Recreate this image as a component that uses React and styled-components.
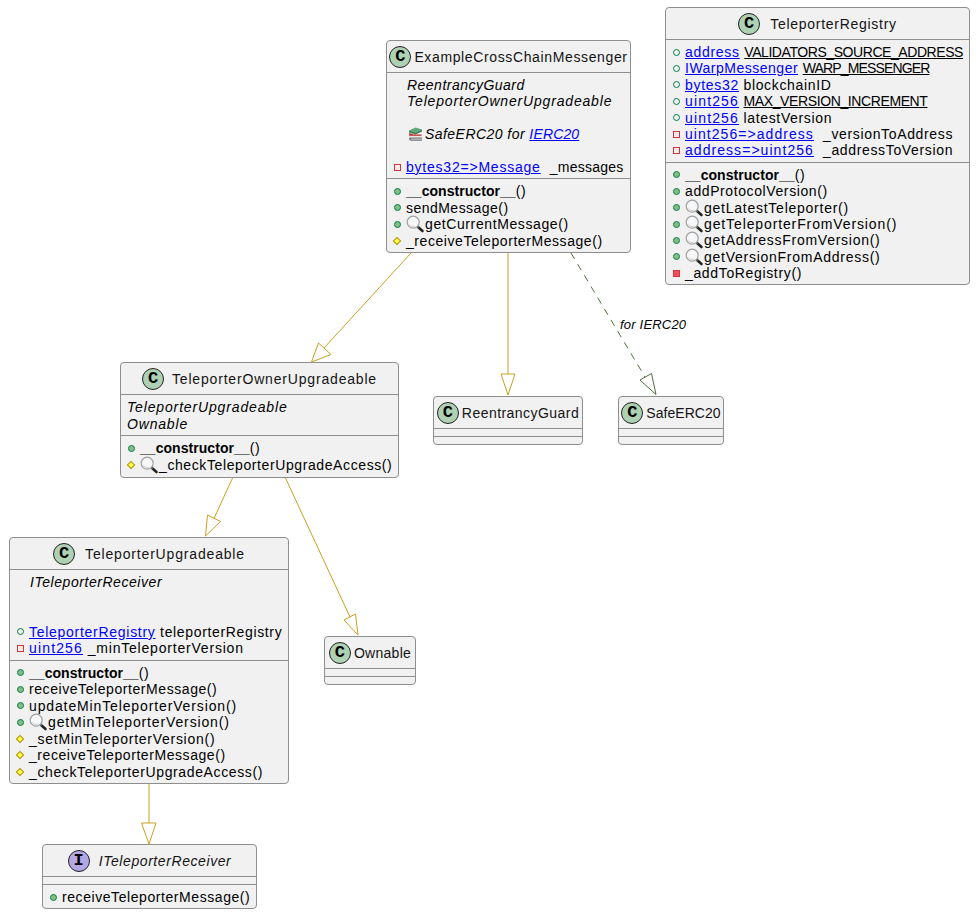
import React from "react";
import styled, { createGlobalStyle } from "styled-components";

const Global = createGlobalStyle`
  html, body { margin: 0; padding: 0; background: #fff; }
  body { font-family: "Liberation Sans", Arial, sans-serif; }
`;

const Canvas = styled.div`
  position: relative;
  width: 976px;
  height: 916px;
  overflow: hidden;
  background: #fff;
  color: #000;
  font-size: 14px;
  letter-spacing: 0.65px;
`;

const Edges = styled.svg`
  position: absolute;
  left: 0;
  top: 0;
`;

const EdgeLabel = styled.span`
  position: absolute;
  left: 620px;
  top: 317px;
  font-size: 13px;
  line-height: 16px;
  font-style: italic;
  letter-spacing: 0.2px;
  white-space: pre;
`;

const Node = styled.div`
  position: absolute;
  left: ${(p) => p.$x}px;
  top: ${(p) => p.$y}px;
  width: ${(p) => p.$w}px;
  box-sizing: border-box;
  background: #f1f1f1;
  border: 1px solid #8e8e8e;
  border-radius: 4px;
`;

const Header = styled.div`
  display: flex;
  align-items: center;
  justify-content: center;
  gap: ${(p) => p.$gap}px;
  height: 31px;
`;

const Spot = styled.span`
  flex: none;
  box-sizing: border-box;
  width: 22px;
  height: 22px;
  border-radius: 50%;
  border: 1px solid #222;
  background: ${(p) => (p.$iface ? "#b4a7e5" : "#add1b2")};
  display: flex;
  align-items: center;
  justify-content: center;
  font-family: "Liberation Mono", monospace;
  font-weight: 700;
  font-size: 17px;
  line-height: 1;
  letter-spacing: 0;
  color: #000;
`;

const Title = styled.span`
  white-space: pre;
  color: #141414;
  letter-spacing: ${(p) => p.$ls ?? 0.7}px;
  font-style: ${(p) => (p.$italic ? "italic" : "normal")};
`;

const Section = styled.div`
  --row-h: ${(p) => p.$rh ?? 16.4}px;
  border-top: 1px solid #8e8e8e;
  min-height: 7px;
  padding: ${(p) => (p.$empty ? "0" : "4px 0 3px")};
`;

const Row = styled.div`
  display: flex;
  align-items: center;
  height: var(--row-h);
  line-height: var(--row-h);
  padding-left: ${(p) => p.$indent ?? 5}px;
  white-space: pre;
`;

const RowText = styled.span`
  white-space: pre;
  letter-spacing: ${(p) => p.$ls ?? 0.65}px;
`;

const MarkSlot = styled.span`
  flex: none;
  width: 10px;
  height: 10px;
  margin-right: 4px;
  display: flex;
  align-items: center;
  justify-content: center;
`;

const PublicMark = styled.i`
  display: block;
  box-sizing: border-box;
  width: 7px;
  height: 7px;
  border-radius: 50%;
  border: 1px solid #038048;
  background: ${(p) => (p.$filled ? "#84be84" : "transparent")};
`;

const PrivateMark = styled.i`
  display: block;
  box-sizing: border-box;
  width: 7px;
  height: 7px;
  border: 1px solid #d0343c;
  background: ${(p) => (p.$filled ? "#f24d5c" : "#fbeaea")};
`;

const ProtectedMark = styled.i`
  display: block;
  box-sizing: border-box;
  width: 6px;
  height: 6px;
  border: 1px solid #b38d22;
  background: #ffff44;
  transform: rotate(45deg);
`;

const Link = styled.a`
  color: #0000ff;
  text-decoration: underline;
  letter-spacing: ${(p) => p.$ls ?? 0.8}px;
`;

const Static = styled.span`
  text-decoration: underline;
  letter-spacing: ${(p) => p.$ls ?? -0.37}px;
`;

const Plain = styled.span`
  letter-spacing: ${(p) => p.$ls}px;
`;

const Bold = styled.b`
  font-weight: 700;
  letter-spacing: 0.05px;
`;

const Italic = styled.em`
  font-style: italic;
  letter-spacing: ${(p) => p.$ls ?? 0.82}px;
`;

const IconHolder = styled.svg`
  flex: none;
  margin-right: ${(p) => p.$mr ?? 0}px;
  overflow: visible;
`;

function Magnifier() {
  return (
    <IconHolder width="19" height="16" viewBox="0 0 19 16">
      <path d="M12 11 L16.5 15" stroke="#222" strokeWidth="2.6" strokeLinecap="round" />
      <circle cx="7.2" cy="6.2" r="6" fill="#f5f7f9" stroke="#a2a2a2" strokeWidth="1.2" />
      <path d="M3.4 8.6 A4.6 4.6 0 0 0 9 10.2" fill="none" stroke="#cfd3d8" strokeWidth="1" />
      <path d="M11.4 10.6 L12.6 11.7" stroke="#777" strokeWidth="1.8" />
    </IconHolder>
  );
}

function Books() {
  return (
    <IconHolder width="17" height="15" viewBox="0 0 17 15" $mr={1}>
      <path d="M2 3.5 L8.5 0.5 L15 2.5 L8.5 5.5 Z" fill="#5ca877" />
      <path d="M2 3.5 L8.5 5.5 L15 2.5 L15 4.5 L8.5 7.5 L2 5.5 Z" fill="#3f7f58" />
      <path d="M2 6 L2.5 9.2 L14 9.2 L15 7.6 L6.5 7.6 Z" fill="#bb2f38" />
      <path d="M3 8.8 H15 V10.2 H3 Z" fill="#ece8df" />
      <path d="M2 10.5 H15 V13.8 H4 Q2 13.8 2 10.5 Z" fill="#75777c" />
      <path d="M4 11.6 H15 V12.7 H4 Z" fill="#c8cacc" />
    </IconHolder>
  );
}

const Mark = ({ kind }) => {
  const map = {
    pubField: <PublicMark />,
    pubMethod: <PublicMark $filled />,
    privField: <PrivateMark />,
    privMethod: <PrivateMark $filled />,
    prot: <ProtectedMark />,
  };
  return <MarkSlot>{map[kind]}</MarkSlot>;
};

const Member = ({ kind, icon, ls, children }) => (
  <Row>
    <Mark kind={kind} />
    {icon && <Magnifier />}
    <RowText $ls={ls}>{children}</RowText>
  </Row>
);

const ClassHead = ({ gap, iface, italic, ls, children }) => (
  <Header $gap={gap}>
    <Spot $iface={iface}>{iface ? "I" : "C"}</Spot>
    <Title $italic={italic} $ls={ls}>{children}</Title>
  </Header>
);

const Arrow = ({ d, tri, stroke, dash }) => (
  <g fill="none" stroke={stroke} strokeWidth="1">
    <path d={d} strokeDasharray={dash} />
    <polygon points={tri} fill="#fff" />
  </g>
);

const GOLD = "#c9a020";

export default function App() {
  return (
    <Canvas>
      <Global />
      <Edges width="976" height="916" viewBox="0 0 976 916">
        <Arrow d="M411 253 L324 348" tri="311.5,362 318.5,343 331,354.5" stroke={GOLD} />
        <Arrow d="M508 253 L508 374" tri="508,395 501,374 515,374" stroke={GOLD} />
        <Arrow d="M571 253 L645 377" tri="656,394.5 640,380 651.5,373.5" stroke="#4f6f3f" dash="7 6" />
        <Arrow d="M233 477 L214 518.5" tri="205.5,536 207.5,515 220.5,521.5" stroke={GOLD} />
        <Arrow d="M285 477 L350 617" tri="358,635 344,620 355.5,614" stroke={GOLD} />
        <Arrow d="M149 783 L149 823" tri="149,844 141.5,823 156,823" stroke={GOLD} />
      </Edges>
      <EdgeLabel>for IERC20</EdgeLabel>

      <Node $x={386} $y={40} $w={245}>
        <ClassHead gap={3} ls={0.63}>ExampleCrossChainMessenger</ClassHead>
        <Section>
          <Row $indent={20}><Italic $ls={0.48}>ReentrancyGuard</Italic></Row>
          <Row $indent={20}><Italic>TeleporterOwnerUpgradeable</Italic></Row>
          <Row />
          <Row $indent={20}>
            <Books />
            <RowText><Italic $ls={0.45}>SafeERC20 for </Italic><Italic $ls={0.15}><Link $ls={0.15}>IERC20</Link></Italic></RowText>
          </Row>
          <Row />
          <Member kind="privField"><Link $ls={0.78}>bytes32=&gt;Message</Link>  <Plain $ls={0.25}>_messages</Plain></Member>
        </Section>
        <Section>
          <Member kind="pubMethod"><Bold>__constructor__</Bold>()</Member>
          <Member kind="pubMethod" ls={0.47}>sendMessage()</Member>
          <Member kind="pubMethod" icon ls={0.6}>getCurrentMessage()</Member>
          <Member kind="prot" ls={0.57}>_receiveTeleporterMessage()</Member>
        </Section>
      </Node>

      <Node $x={665} $y={7} $w={305}>
        <ClassHead gap={10} ls={0.72}>TeleporterRegistry</ClassHead>
        <Section>
          <Member kind="pubField"><Link $ls={0.7}>address</Link> <Static $ls={-0.43}>VALIDATORS_SOURCE_ADDRESS</Static></Member>
          <Member kind="pubField"><Link $ls={0.5}>IWarpMessenger</Link> <Static $ls={-0.85}>WARP_MESSENGER</Static></Member>
          <Member kind="pubField"><Link $ls={0.7}>bytes32</Link> blockchainID</Member>
          <Member kind="pubField"><Link $ls={1.15}>uint256</Link> <Static $ls={-0.39}>MAX_VERSION_INCREMENT</Static></Member>
          <Member kind="pubField"><Link $ls={1.15}>uint256</Link> latestVersion</Member>
          <Member kind="privField"><Link $ls={1.05}>uint256=&gt;address</Link>  _versionToAddress</Member>
          <Member kind="privField"><Link $ls={1.05}>address=&gt;uint256</Link>  _addressToVersion</Member>
        </Section>
        <Section>
          <Member kind="pubMethod"><Bold>__constructor__</Bold>()</Member>
          <Member kind="pubMethod" ls={0.6}>addProtocolVersion()</Member>
          <Member kind="pubMethod" icon ls={0.75}>getLatestTeleporter()</Member>
          <Member kind="pubMethod" icon ls={0.88}>getTeleporterFromVersion()</Member>
          <Member kind="pubMethod" icon ls={0.74}>getAddressFromVersion()</Member>
          <Member kind="pubMethod" icon ls={0.74}>getVersionFromAddress()</Member>
          <Member kind="privMethod">_addToRegistry()</Member>
        </Section>
      </Node>

      <Node $x={120} $y={362} $w={279}>
        <ClassHead gap={8} ls={0.82}>TeleporterOwnerUpgradeable</ClassHead>
        <Section $rh={16.7}>
          <Row $indent={6}><Italic $ls={0.85}>TeleporterUpgradeable</Italic></Row>
          <Row $indent={6}><Italic>Ownable</Italic></Row>
        </Section>
        <Section $rh={16.7}>
          <Member kind="pubMethod"><Bold>__constructor__</Bold>()</Member>
          <Member kind="prot" icon ls={0.6}>_checkTeleporterUpgradeAccess()</Member>
        </Section>
      </Node>

      <Node $x={433} $y={396} $w={150}>
        <ClassHead gap={3} ls={0.45}>ReentrancyGuard</ClassHead>
        <Section $empty />
        <Section $empty />
      </Node>

      <Node $x={618} $y={396} $w={106}>
        <ClassHead gap={3} ls={0.05}>SafeERC20</ClassHead>
        <Section $empty />
        <Section $empty />
      </Node>

      <Node $x={9} $y={537} $w={280}>
        <ClassHead gap={10} ls={0.83}>TeleporterUpgradeable</ClassHead>
        <Section $rh={16.55}>
          <Row $indent={20}><Italic $ls={0.55}>ITeleporterReceiver</Italic></Row>
          <Row />
          <Row />
          <Member kind="pubField"><Link $ls={0.72}>TeleporterRegistry</Link> teleporterRegistry</Member>
          <Member kind="privField" ls={0.8}><Link $ls={1.15}>uint256</Link> _minTeleporterVersion</Member>
        </Section>
        <Section $rh={16.5}>
          <Member kind="pubMethod"><Bold>__constructor__</Bold>()</Member>
          <Member kind="pubMethod" ls={0.57}>receiveTeleporterMessage()</Member>
          <Member kind="pubMethod" ls={0.87}>updateMinTeleporterVersion()</Member>
          <Member kind="pubMethod" icon ls={0.86}>getMinTeleporterVersion()</Member>
          <Member kind="prot" ls={0.73}>_setMinTeleporterVersion()</Member>
          <Member kind="prot" ls={0.57}>_receiveTeleporterMessage()</Member>
          <Member kind="prot" ls={0.62}>_checkTeleporterUpgradeAccess()</Member>
        </Section>
      </Node>

      <Node $x={324} $y={636} $w={92}>
        <ClassHead gap={3} ls={0.28}>Ownable</ClassHead>
        <Section $empty />
        <Section $empty />
      </Node>

      <Node $x={42} $y={844} $w={215}>
        <ClassHead gap={9} iface italic ls={0.58}>ITeleporterReceiver</ClassHead>
        <Section $empty />
        <Section>
          <Member kind="pubMethod" ls={0.57}>receiveTeleporterMessage()</Member>
        </Section>
      </Node>
    </Canvas>
  );
}
